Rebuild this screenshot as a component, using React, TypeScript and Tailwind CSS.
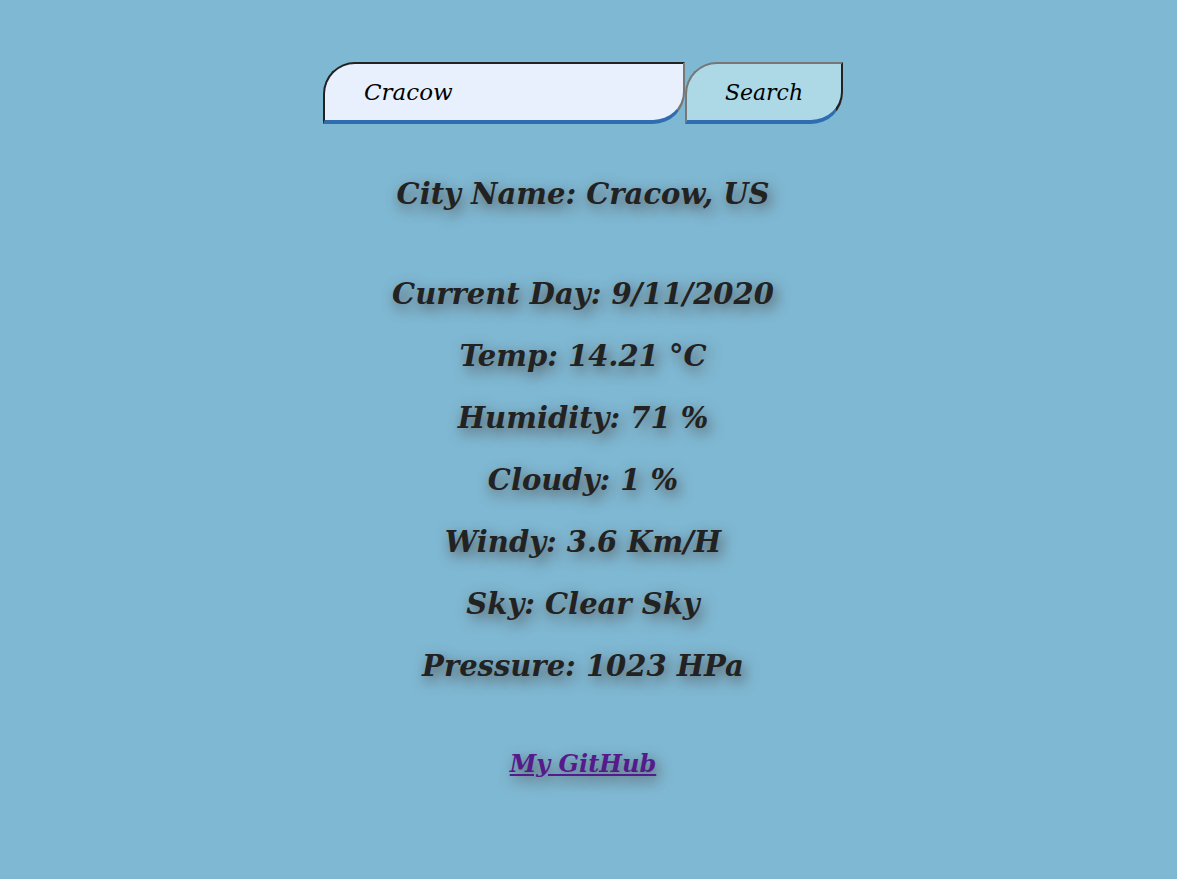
import { useState } from "react";

const lines = [
  "Current Day: 9/11/2020",
  "Temp: 14.21 °C",
  "Humidity: 71 %",
  "Cloudy: 1 %",
  "Windy: 3.6 Km/H",
  "Sky: Clear Sky",
  "Pressure: 1023 HPa",
];

export default function App() {
  const [city, setCity] = useState("Cracow");

  return (
    <div className="min-h-[879px] bg-[#7fb8d3] pr-[11px] pt-[62px] text-center font-['DejaVu_Serif',serif] italic text-[#222]">
      {/* search form */}
      <form
        className="flex justify-center"
        onSubmit={(e) => e.preventDefault()}
      >
        <input
          type="text"
          value={city}
          onChange={(e) => setCity(e.target.value)}
          className="h-[62px] w-[362px] rounded-tl-[32px] rounded-br-[32px] border-2 border-t-[#222] border-l-[#222] border-r-[#777] border-b-4 border-b-[#2f6db0] bg-[#e8f0fe] pl-[39px] text-[23px] italic text-black outline-none"
        />
        <button
          type="submit"
          className="h-[62px] w-[158px] rounded-tl-[32px] rounded-br-[32px] border-2 border-t-[#777] border-l-[#777] border-r-[#222] border-b-4 border-b-[#2f6db0] bg-[#add8e6] text-[22px] italic text-black"
        >
          Search
        </button>
      </form>

      {/* weather info */}
      <div className="mt-[52px] font-bold [text-shadow:3px_5px_14px_#555]">
        <h2 className="text-[29px] leading-[36px]">City Name: Cracow, US</h2>
        <div className="mt-[64px] flex flex-col gap-[26px]">
          {lines.map((l) => (
            <p key={l} className="text-[29px] leading-[36px]">
              {l}
            </p>
          ))}
        </div>
        <a
          href="#"
          className="mt-[62px] inline-block text-[24px] text-[#551a8b] underline"
        >
          My GitHub
        </a>
      </div>
    </div>
  );
}
